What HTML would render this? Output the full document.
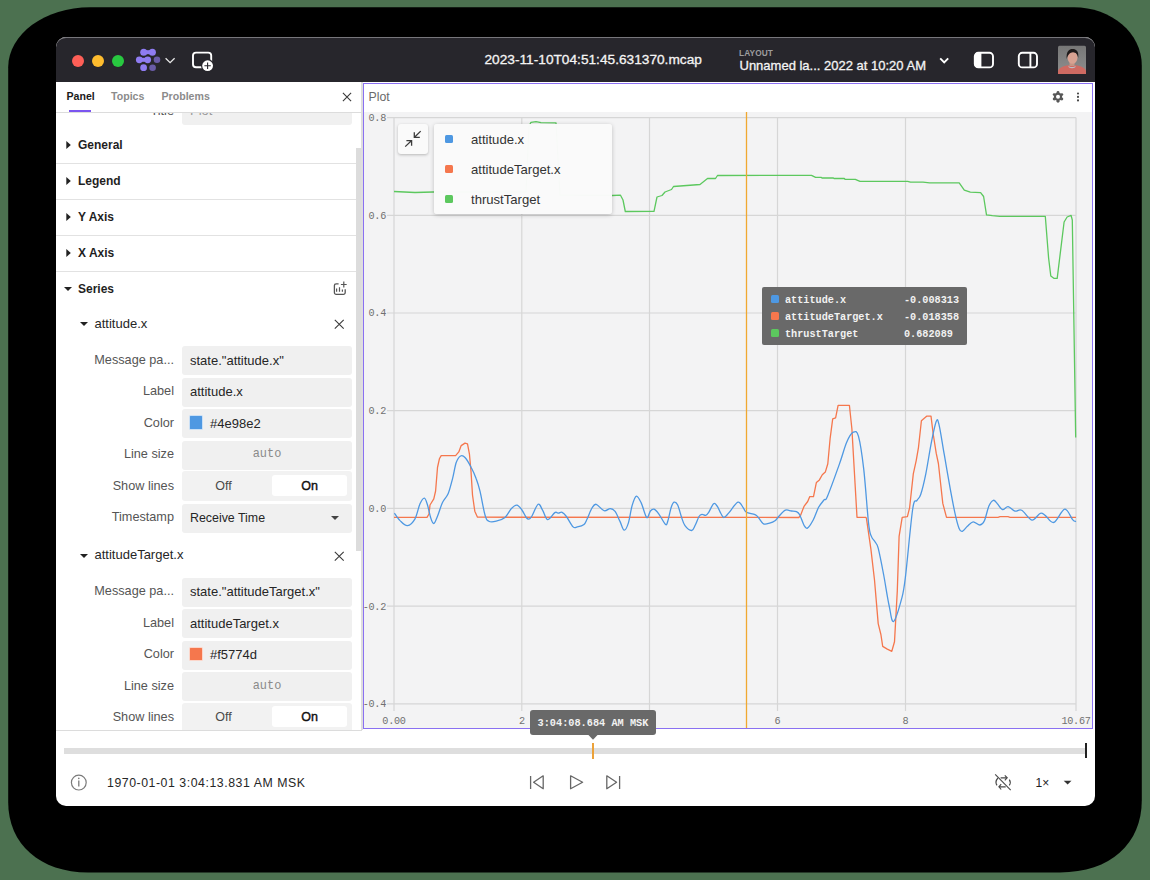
<!DOCTYPE html>
<html><head><meta charset="utf-8">
<style>
*{box-sizing:border-box;margin:0;padding:0}
html,body{width:1150px;height:880px;overflow:hidden;background:#4c7150;font-family:"Liberation Sans",sans-serif;position:relative}
.a{position:absolute}
.t{position:absolute;white-space:nowrap;line-height:1}
.mono{font-family:"Liberation Mono",monospace}
#shadow{left:9px;top:7px;width:1133px;height:865px;background:#000;border-radius:70px}
#win{left:56px;top:37px;width:1038.6px;height:769px;background:#fff;border-radius:10px;overflow:hidden}
#titlebar{left:56px;top:37px;width:1038.6px;height:45px;background:#27262c;border-top:1px solid #77767b;border-radius:10px 10px 0 0}
.tl{position:absolute;top:54.5px;width:12.5px;height:12.5px;border-radius:50%}
.hdr{position:absolute;left:78px;font-weight:bold;font-size:12px;color:#1f1f1f;white-space:nowrap;line-height:1;margin-top:-0.7px}
.tri{position:absolute;left:66.4px;width:0;height:0;border-top:3.75px solid transparent;border-bottom:3.75px solid transparent;border-left:4.2px solid #222;margin-top:0.2px}
.trid{position:absolute;width:0;height:0;border-left:4.2px solid transparent;border-right:4.2px solid transparent;border-top:4.3px solid #222}
.rdiv{position:absolute;left:56px;width:300px;height:1px;background:#e2e2e2;margin-top:0.8px}
.lbl{position:absolute;left:54px;width:120px;text-align:right;font-size:12.7px;color:#555;white-space:nowrap;line-height:1}
.inp{position:absolute;left:182px;width:170px;height:29px;background:#f0f0f0;border-radius:3px}
.itx{position:absolute;left:190px;font-size:13px;color:#262626;white-space:nowrap;line-height:1}
.auto{position:absolute;left:182px;width:170px;text-align:center;font-family:"Liberation Mono",monospace;font-size:11.9px;color:#8a8a8a;line-height:1}
.on{position:absolute;left:272px;width:75px;height:21px;background:#fff;border-radius:3px}
.offt{position:absolute;left:178.5px;width:90px;text-align:center;font-size:12.5px;color:#4a4a4a;line-height:1}
.ont{position:absolute;left:272px;width:75px;text-align:center;font-size:12.5px;color:#111;line-height:1;-webkit-text-stroke:0.4px #111}
.sw{position:absolute;left:188.8px;width:14.6px;height:14.6px;border-radius:1.5px;border:1px solid rgba(255,255,255,0.7)}
.ylab{position:absolute;left:340px;width:46px;text-align:right;font-family:"Liberation Mono",monospace;font-size:10.2px;color:#707070;line-height:1;letter-spacing:-0.3px}
.xlab{position:absolute;width:40px;text-align:center;font-family:"Liberation Mono",monospace;font-size:10.2px;color:#707070;line-height:1;letter-spacing:-0.3px}
.lg{position:absolute;left:471px;font-size:13.1px;color:#333;white-space:nowrap;line-height:1}
.lgs{position:absolute;left:445px;width:8px;height:8px;border-radius:1.5px}
.tts{position:absolute;left:771px;width:8px;height:8px;border-radius:1.5px}
.ttn{position:absolute;left:785px;margin-top:2.2px;transform:scaleY(1.12);transform-origin:0 50%;font-family:"Liberation Mono",monospace;font-weight:bold;font-size:10.2px;color:#f2f2f2;white-space:nowrap;line-height:1}
.ttv{position:absolute;left:904px;margin-top:2.2px;transform:scaleY(1.12);transform-origin:0 50%;font-family:"Liberation Mono",monospace;font-weight:bold;font-size:10.2px;color:#f2f2f2;white-space:nowrap;line-height:1}
</style></head>
<body>
<svg class="a" style="left:0;top:0" width="1150" height="880" viewBox="0 0 1150 880"><path d="M8.2,67.3 C8.2,34.2 44.9,7.3 90.2,7.3 H1073.8 C1111.4,7.3 1141.8,33.3 1141.8,65.3 V800.3 C1141.8,843.5 1110.6,872.5 1059.8,872.5 H88.2 C40.2,872.5 8.2,844.3 8.2,802.3 Z" fill="#000"/></svg>
<div id="win" class="a"></div>
<div id="titlebar" class="a"></div>
<div class="tl" style="left:71.5px;background:#fe5f57"></div>
<div class="tl" style="left:91.5px;background:#febc2e"></div>
<div class="tl" style="left:111.5px;background:#28c840"></div>

<!-- title bar icons -->
<svg class="a" style="left:0;top:0" width="1150" height="90" viewBox="0 0 1150 90">
  <g fill="#8f7cf2">
    <circle cx="143.7" cy="52.2" r="3.5"/><circle cx="152.4" cy="52.2" r="3.5"/><rect x="143.7" y="50.2" width="8.7" height="4"/>
    <circle cx="139.3" cy="59.8" r="3.4"/><circle cx="147.7" cy="59.8" r="3.4"/><rect x="139.3" y="57.8" width="8.4" height="4"/>
    <circle cx="143.6" cy="67.7" r="3.4"/>
  </g>
  <g fill="#6a5ca8">
    <circle cx="157" cy="59.8" r="3.3"/>
    <circle cx="152.6" cy="67.7" r="3.3"/>
  </g>
  <path d="M165.6,58.2 L170.1,62.6 L174.6,58.2" fill="none" stroke="#e8e8e8" stroke-width="1.3"/>
  <rect x="193" y="52.6" width="18.2" height="14.6" rx="3" fill="none" stroke="#fff" stroke-width="1.9"/>
  <circle cx="207.6" cy="65.7" r="6.6" fill="#27262c"/>
  <circle cx="207.6" cy="65.7" r="5.4" fill="#fff"/>
  <path d="M207.6,62.5 V68.9 M204.4,65.7 H210.8" stroke="#27262c" stroke-width="1.1"/>
  <path d="M940.2,58.4 L944.2,62.4 L948.2,58.4" fill="none" stroke="#fff" stroke-width="1.9"/>
  <rect x="974.8" y="52.8" width="18.2" height="14.6" rx="3.5" fill="none" stroke="#fff" stroke-width="1.9"/>
  <path d="M977.5,52.8 H981.4 V67.4 H977.5 A2.7,2.7 0 0 1 974.8,64.7 V55.5 A2.7,2.7 0 0 1 977.5,52.8Z" fill="#fff"/>
  <rect x="1018.8" y="52.8" width="18.2" height="14.6" rx="3.5" fill="none" stroke="#fff" stroke-width="1.9"/>
  <path d="M1030.4,52.8 V67.4" stroke="#fff" stroke-width="1.9"/>
  <defs><linearGradient id="av" x1="0" y1="0" x2="0" y2="1"><stop offset="0" stop-color="#777"/><stop offset="1" stop-color="#8e8e8e"/></linearGradient></defs>
  <rect x="1058" y="45.8" width="28" height="28.2" rx="1.5" fill="url(#av)"/>
  <path d="M1058,74 V71 C1059,67.5 1063,66 1068.5,65.2 H1075.5 C1081,66 1085,67.5 1086,71 V74Z" fill="#cf6a62"/>
  <path d="M1069.5,62 H1074.5 V66 H1069.5Z" fill="#c79585"/>
  <path d="M1068,65.5 C1070,67.5 1074,67.5 1076,65.5 L1075,67.5 C1073,68.5 1071,68.5 1069,67.5Z" fill="#b8c0c8"/>
  <ellipse cx="1072.5" cy="57.5" rx="5" ry="6.3" fill="#d9a292"/>
  <path d="M1066.7,59 C1066,51.5 1069,49 1072.5,49 C1076.5,49 1079,51.5 1078.2,58 C1077.5,54 1076,52.5 1073,52.3 C1070,52.5 1068,54.5 1066.7,59Z" fill="#1f1b1b"/>
</svg>
<div class="t" style="left:484.5px;top:53px;font-size:13.7px;color:#f4f4f4;-webkit-text-stroke:0.3px #f4f4f4">2023-11-10T04:51:45.631370.mcap</div>
<div class="t" style="left:739px;top:48.8px;font-size:8.3px;font-weight:bold;color:#9d9d9f;letter-spacing:0.1px">LAYOUT</div>
<div class="t" style="left:739.5px;top:59px;font-size:13px;color:#f4f4f4;-webkit-text-stroke:0.3px #f4f4f4">Unnamed la... 2022 at 10:20 AM</div>

<!-- left panel -->
<div class="t" style="left:66.5px;top:91px;font-size:10.6px;font-weight:bold;color:#1a1a1a">Panel</div>
<div class="t" style="left:111px;top:91px;font-size:10.6px;color:#8b8b8b;font-weight:bold">Topics</div>
<div class="t" style="left:161.5px;top:91px;font-size:10.6px;color:#8b8b8b;font-weight:bold">Problems</div>
<div class="a" style="left:69px;top:110px;width:22px;height:2px;background:#7b55f0"></div>
<svg class="a" style="left:340px;top:90px" width="14" height="14"><path d="M2.9,2.9 L11.1,11.1 M11.1,2.9 L2.9,11.1" stroke="#3a3a3a" stroke-width="1.1"/></svg>

<div class="a" style="left:56px;top:112.5px;width:306px;height:617px;overflow:hidden">
  <!-- inner content uses page coords via offset -->
  <div class="a" style="left:-56px;top:-112.5px;width:1150px;height:880px">
    <div class="lbl" style="top:104.5px">Title</div>
    <div class="inp" style="top:96px"></div>
    <div class="itx" style="top:104px;color:#9a9a9a">Plot</div>

    <svg class="a" style="left:60px;top:137.15px" width="16" height="16" viewBox="60 137.15 16 16"><path d="M66.3,141.20 L70.8,145.15 L66.3,149.10Z" fill="#222"/></svg><div class="hdr" style="top:139.5px">General</div>
    <div class="rdiv" style="top:162.2px"></div>
    <svg class="a" style="left:60px;top:173.15px" width="16" height="16" viewBox="60 173.15 16 16"><path d="M66.3,177.20 L70.8,181.15 L66.3,185.10Z" fill="#222"/></svg><div class="hdr" style="top:175.5px">Legend</div>
    <div class="rdiv" style="top:198.2px"></div>
    <svg class="a" style="left:60px;top:209.15px" width="16" height="16" viewBox="60 209.15 16 16"><path d="M66.3,213.20 L70.8,217.15 L66.3,221.10Z" fill="#222"/></svg><div class="hdr" style="top:211.5px">Y Axis</div>
    <div class="rdiv" style="top:234.2px"></div>
    <svg class="a" style="left:60px;top:245.15px" width="16" height="16" viewBox="60 245.15 16 16"><path d="M66.3,249.20 L70.8,253.15 L66.3,257.10Z" fill="#222"/></svg><div class="hdr" style="top:247.5px">X Axis</div>
    <div class="rdiv" style="top:270.2px"></div>
    <div class="trid" style="left:63.9px;top:286.5px"></div><div class="hdr" style="top:283.5px">Series</div>
    <svg class="a" style="left:330px;top:279px" width="20" height="20" viewBox="330 279 20 20">
      <path d="M338.6,283.8 H336.2 A1.8,1.8 0 0 0 334.4,285.6 V292.6 A1.8,1.8 0 0 0 336.2,294.4 H343.4 A1.8,1.8 0 0 0 345.2,292.6 V289.2" fill="none" stroke="#555" stroke-width="1.3"/>
      <path d="M336.6,288.5 V291.8 M339.5,287.2 V291.8 M342.4,289.5 V291.8 M343.8,281.6 V287.4 M340.9,284.5 H346.7" stroke="#555" stroke-width="1.2"/>
    </svg>

    <!-- series 1 -->
    <div class="trid" style="left:80px;top:322.3px"></div>
    <div class="t" style="left:94.5px;top:316.5px;font-size:13px;color:#262626">attitude.x</div>
    <svg class="a" style="left:332px;top:317px" width="14" height="14"><path d="M2.8,2.8 L11.7,11.7 M11.7,2.8 L2.8,11.7" stroke="#3a3a3a" stroke-width="1.1"/></svg>

    <div class="lbl" style="top:353.5px">Message pa...</div><div class="inp" style="top:346px"></div>
    <div class="itx" style="top:353.5px">state."attitude.x"</div>
    <div class="lbl" style="top:385px">Label</div><div class="inp" style="top:377.5px"></div>
    <div class="itx" style="top:385px">attitude.x</div>
    <div class="lbl" style="top:416.5px">Color</div><div class="inp" style="top:409px"></div>
    <div class="sw" style="top:415px;background:#4e98e2"></div>
    <div class="itx" style="left:210px;top:416.5px">#4e98e2</div>
    <div class="lbl" style="top:448px">Line size</div><div class="inp" style="top:440.5px"></div>
    <div class="auto" style="top:449.2px">auto</div>
    <div class="lbl" style="top:479.5px">Show lines</div><div class="inp" style="top:471px;height:29.5px;background:#f2f2f2"></div>
    <div class="on" style="top:474.8px"></div>
    <div class="offt" style="top:479.5px">Off</div><div class="ont" style="top:479.5px">On</div>
    <div class="lbl" style="top:511px">Timestamp</div><div class="inp" style="top:503.5px"></div>
    <div class="itx" style="top:511.5px;font-size:12.4px">Receive Time</div>
    <div class="trid" style="left:330.5px;top:515.5px;border-left-width:4.5px;border-right-width:4.5px;border-top-width:4.5px;border-top-color:#444"></div>

    <!-- series 2 -->
    <div class="trid" style="left:80px;top:553.8px"></div>
    <div class="t" style="left:94.5px;top:548px;font-size:13px;color:#262626">attitudeTarget.x</div>
    <svg class="a" style="left:332px;top:548.5px" width="14" height="14"><path d="M2.8,2.8 L11.7,11.7 M11.7,2.8 L2.8,11.7" stroke="#3a3a3a" stroke-width="1.1"/></svg>

    <div class="lbl" style="top:585px">Message pa...</div><div class="inp" style="top:577.5px"></div>
    <div class="itx" style="top:585px">state."attitudeTarget.x"</div>
    <div class="lbl" style="top:616.5px">Label</div><div class="inp" style="top:609px"></div>
    <div class="itx" style="top:616.5px">attitudeTarget.x</div>
    <div class="lbl" style="top:648px">Color</div><div class="inp" style="top:640.5px"></div>
    <div class="sw" style="top:646.6px;background:#f5774d"></div>
    <div class="itx" style="left:210px;top:648px">#f5774d</div>
    <div class="lbl" style="top:679.5px">Line size</div><div class="inp" style="top:672px"></div>
    <div class="auto" style="top:681.3px">auto</div>
    <div class="lbl" style="top:711px">Show lines</div><div class="inp" style="top:702.5px;height:29.5px;background:#f2f2f2"></div>
    <div class="on" style="top:706.3px"></div>
    <div class="offt" style="top:711px">Off</div><div class="ont" style="top:711px">On</div>

    <!-- scrollbar -->
    <div class="a" style="left:356px;top:148px;width:6px;height:402.5px;background:#dcdcdc"></div>
  </div>
</div>
<div class="a" style="left:56px;top:112px;width:306px;height:1px;background:#dcdcdc"></div>
<div class="a" style="left:361px;top:82px;width:2px;height:648px;background:#dedede"></div>

<!-- plot panel -->
<div class="a" style="left:362.5px;top:82.5px;width:730.5px;height:646.5px;background:#f3f3f4;border:1.5px solid #8a70f2"></div>
<div class="a" style="left:364px;top:84px;width:728px;height:28px;background:#fff"></div>
<div class="t" style="left:368.5px;top:90.5px;font-size:12.3px;color:#6a6a6a">Plot</div>
<svg class="a" style="left:1048px;top:87px" width="40" height="20" viewBox="1048 87 40 20">
  <g fill="#585858"><circle cx="1058" cy="96.8" r="4.1"/>
  <circle cx="1058" cy="92.4" r="1.45"/><circle cx="1058" cy="101.2" r="1.45"/>
  <circle cx="1054.2" cy="94.6" r="1.45"/><circle cx="1061.8" cy="94.6" r="1.45"/>
  <circle cx="1054.2" cy="99" r="1.45"/><circle cx="1061.8" cy="99" r="1.45"/></g>
  <circle cx="1058" cy="96.8" r="2" fill="#fff"/>
  <circle cx="1078" cy="93.5" r="1.05" fill="#444"/>
  <circle cx="1078" cy="96.9" r="1.05" fill="#444"/>
  <circle cx="1078" cy="100.4" r="1.05" fill="#444"/>
</svg>

<!-- chart -->
<svg class="a" style="left:0;top:0" width="1150" height="880" viewBox="0 0 1150 880">
  <defs><clipPath id="pc"><rect x="364" y="112" width="728" height="616"/></clipPath></defs>
  <g clip-path="url(#pc)">
    <g stroke="#d6d6d6" stroke-width="1.2" fill="none">
      <path d="M394,117.6 H1076 M394,215.3 H1076 M394,313 H1076 M394,410.6 H1076 M394,508.4 H1076 M394,606.2 H1076 M394,703.9 H1076"/>
      <path d="M394,117.6 V711 M521.8,117.6 V711 M649.5,117.6 V711 M777.5,117.6 V711 M905.5,117.6 V711 M1076,117.6 V711"/>
      <path d="M387,117.6 H394 M387,215.3 H394 M387,313 H394 M387,410.6 H394 M387,508.4 H394 M387,606.2 H394 M387,703.9 H394"/>
    </g>
    <path d="M394.0,191.5 L415.0,192.5 L433.0,192.0 L526.0,192.0 L529.0,126.0 L531.0,122.3 L536.0,121.6 L541.0,122.6 L556.0,122.8 L560.0,195.0 L612.5,195.5 L620.5,195.2 L623.0,200.0 L625.3,211.5 L654.0,211.4 L657.0,197.0 L662.0,195.5 L665.0,192.0 L671.5,189.5 L673.5,186.5 L700.0,184.5 L707.5,178.5 L715.5,178.5 L717.5,175.5 L811.5,175.4 L815.6,177.4 L821.4,177.4 L822.0,178.0 L833.4,178.0 L834.0,178.5 L844.3,178.5 L845.0,179.3 L855.3,179.3 L860.0,181.3 L907.7,181.3 L910.5,182.2 L923.0,182.2 L929.6,182.8 L959.2,182.8 L964.3,190.2 L970.3,192.2 L980.6,192.6 L983.6,196.5 L986.5,214.9 L992.4,215.6 L999.8,216.3 L1045.3,216.3 L1048.6,258.0 L1050.8,276.0 L1053.8,278.3 L1057.2,278.3 L1064.1,222.0 L1067.1,217.0 L1071.1,215.4 L1072.3,220.0 L1075.7,437.5" fill="none" stroke="#5cc85e" stroke-width="1.3" stroke-linejoin="round"/>
    <path d="M394.0,517.3 L427.0,517.3 L429.0,514.0 L430.0,505.0 L433.8,498.8 L435.6,491.0 L437.5,467.5 L439.4,458.8 L441.2,455.6 L455.6,455.6 L458.8,451.9 L461.2,445.6 L465.0,443.1 L467.5,443.8 L469.4,453.8 L471.0,471.2 L472.5,495.0 L474.8,511.2 L477.5,517.2 L798.8,517.5 L800.5,515.5 L804.0,506.4 L807.7,501.5 L809.8,496.6 L813.5,496.6 L816.4,482.4 L819.4,479.9 L822.3,474.8 L825.3,472.1 L827.8,463.7 L830.2,437.8 L832.7,418.9 L835.6,417.9 L838.1,405.3 L849.4,405.3 L851.9,429.0 L857.0,517.3 L865.9,517.3 L866.4,518.2 L870.9,549.1 L874.5,580.0 L878.2,623.6 L880.9,634.5 L882.7,646.4 L887.3,649.1 L891.8,651.3 L894.5,641.8 L897.3,590.9 L899.1,536.4 L902.2,517.3 L907.4,516.7 L909.6,507.8 L913.3,473.9 L916.2,460.6 L918.5,447.3 L921.4,420.7 L926.6,416.2 L931.0,416.2 L933.2,434.0 L936.2,453.2 L938.4,463.5 L942.8,503.4 L946.5,517.4 L998.0,517.3 L1000.0,516.7 L1008.0,516.7 L1010.0,517.3 L1076.0,517.3" fill="none" stroke="#f5774d" stroke-width="1.3" stroke-linejoin="round"/>
    <path d="M394.4,513.1 C395.3,514.4 397.8,518.5 400.0,520.6 C402.2,522.7 405.0,525.9 407.5,525.6 C410.0,525.3 412.9,522.4 415.0,518.8 C417.1,515.1 418.4,507.2 420.0,503.8 C421.6,500.3 423.1,497.9 424.4,498.1 C425.6,498.3 426.5,501.8 427.5,505.0 C428.5,508.2 429.6,514.4 430.6,517.5 C431.6,520.6 432.6,523.7 433.8,523.5 C434.9,523.3 436.0,519.8 437.5,516.2 C439.0,512.8 440.7,506.2 442.5,502.5 C444.3,498.8 446.4,497.7 448.1,493.8 C449.8,489.8 451.1,484.0 452.5,478.8 C453.9,473.5 454.9,466.3 456.2,462.5 C457.6,458.7 459.1,456.8 460.6,456.0 C462.1,455.2 463.2,455.6 465.0,457.5 C466.8,459.4 469.4,464.0 471.2,467.5 C473.1,471.0 474.8,474.8 476.2,478.8 C477.7,482.7 478.5,485.2 480.0,491.2 C481.5,497.3 483.5,510.0 485.0,515.0 C486.5,520.0 486.9,520.2 488.8,521.2 C490.6,522.3 493.5,521.9 496.2,521.2 C499.0,520.6 502.5,519.6 505.0,517.5 C507.5,515.4 509.3,510.8 511.2,508.8 C513.2,506.7 515.1,505.0 516.9,505.2 C518.7,505.5 520.3,508.0 521.9,510.0 C523.5,512.0 525.1,516.0 526.2,517.5 C527.4,519.0 527.8,519.4 528.7,519.2 C529.6,519.0 530.1,519.0 531.7,516.5 C533.3,514.0 536.3,505.3 538.1,504.3 C539.9,503.3 541.1,507.8 542.7,510.4 C544.3,512.9 545.5,519.2 547.5,519.6 C549.5,520.0 553.0,513.7 554.8,512.6 C556.6,511.5 557.3,513.2 558.5,513.1 C559.7,513.0 560.8,511.7 562.1,512.3 C563.4,512.9 564.6,514.1 566.4,516.5 C568.2,518.9 571.3,525.2 573.1,526.9 C574.9,528.6 575.5,527.3 577.3,526.9 C579.1,526.5 582.4,525.7 584.0,524.4 C585.6,523.1 585.8,521.7 587.1,519.0 C588.4,516.3 590.5,510.4 592.0,508.0 C593.5,505.6 594.2,503.9 596.2,504.3 C598.2,504.8 601.8,510.0 604.1,510.7 C606.4,511.4 608.4,508.5 610.2,508.6 C612.0,508.7 613.5,509.3 615.1,511.4 C616.7,513.5 618.5,518.3 620.0,521.4 C621.5,524.5 622.8,530.0 624.2,530.2 C625.6,530.4 627.2,526.7 628.5,522.6 C629.8,518.5 630.8,510.0 632.1,505.6 C633.4,501.2 634.9,496.5 636.4,496.1 C637.9,495.7 639.6,499.5 641.3,503.1 C643.0,506.7 645.2,516.2 646.7,517.5 C648.2,518.8 649.2,512.4 650.4,511.0 C651.6,509.6 652.6,508.7 654.0,509.2 C655.4,509.7 657.0,511.6 658.9,514.1 C660.8,516.6 664.0,523.3 665.5,524.4 C667.0,525.5 667.0,523.5 667.9,520.8 C668.8,518.1 670.0,511.1 671.0,508.0 C672.0,504.9 672.9,502.7 674.0,502.2 C675.1,501.7 676.5,502.6 677.7,505.0 C678.9,507.4 680.1,513.0 681.3,516.5 C682.5,520.0 683.3,523.4 685.0,525.7 C686.7,528.0 690.0,530.6 691.7,530.5 C693.4,530.4 694.1,527.3 695.3,525.0 C696.5,522.7 697.9,518.3 699.0,516.5 C700.1,514.7 700.9,514.5 702.0,514.3 C703.1,514.1 704.6,515.6 705.7,515.3 C706.8,515.0 707.4,514.2 708.7,512.3 C710.0,510.4 712.2,504.7 713.6,503.7 C715.0,502.7 716.0,504.6 717.2,506.2 C718.4,507.8 719.8,511.6 720.9,513.5 C722.0,515.4 722.6,517.6 723.9,517.5 C725.2,517.4 726.5,515.4 728.8,512.9 C731.1,510.3 735.5,503.0 737.9,502.2 C740.3,501.4 742.0,506.3 743.4,508.0 C744.8,509.7 744.5,511.2 746.4,512.3 C748.3,513.4 753.0,513.8 755.0,514.7 C757.0,515.6 757.2,516.2 758.6,517.7 C760.0,519.2 761.7,522.9 763.5,523.8 C765.3,524.7 767.7,523.7 769.6,523.2 C771.5,522.7 773.5,521.9 775.0,520.8 C776.5,519.7 777.0,518.3 778.7,516.5 C780.4,514.7 783.3,511.1 785.4,510.2 C787.5,509.3 789.7,510.8 791.5,511.0 C793.3,511.2 795.1,511.1 796.4,511.7 C797.7,512.3 798.2,512.3 799.5,514.5 C800.8,516.7 802.6,522.7 803.9,525.0 C805.2,527.3 805.8,529.0 807.4,528.2 C809.0,527.4 811.3,523.5 813.2,520.0 C815.1,516.5 816.8,510.6 818.6,507.3 C820.4,504.0 822.5,501.9 824.0,500.0 C825.5,498.1 825.0,502.1 827.5,496.2 C830.0,490.3 836.1,473.4 839.3,464.4 C842.5,455.4 844.4,447.7 846.7,442.3 C849.0,436.9 851.3,433.2 853.3,432.2 C855.3,431.2 856.8,430.3 858.5,436.4 C860.2,442.5 862.0,454.4 863.7,468.9 C865.4,483.4 867.3,512.4 868.6,523.6 C869.9,534.9 870.3,533.4 871.4,536.4 C872.5,539.4 873.9,539.8 875.0,541.8 C876.1,543.8 876.8,542.8 878.2,548.2 C879.6,553.7 881.8,565.0 883.6,574.5 C885.4,584.0 887.4,597.7 889.1,605.5 C890.8,613.3 891.5,622.7 893.6,621.5 C895.7,620.3 899.8,605.7 901.8,598.2 C903.8,590.7 903.7,591.3 905.5,576.4 C907.3,561.5 910.8,521.7 912.7,509.0 C914.6,496.3 915.7,502.8 917.0,500.4 C918.3,498.0 919.2,498.9 920.7,494.5 C922.2,490.1 924.1,482.3 925.8,473.9 C927.5,465.5 929.3,453.1 931.0,444.3 C932.7,435.6 934.9,424.6 936.2,421.4 C937.6,418.2 937.8,419.6 939.1,425.1 C940.5,430.7 942.4,444.1 944.3,454.7 C946.1,465.3 948.4,478.5 950.2,488.6 C952.1,498.7 953.9,508.6 955.4,515.2 C956.9,521.9 958.0,525.8 959.1,528.5 C960.2,531.2 960.9,531.8 962.3,531.4 C963.7,531.0 965.6,527.9 967.4,526.3 C969.2,524.7 971.0,522.0 973.1,521.8 C975.2,521.6 978.0,525.2 979.9,525.0 C981.8,524.8 982.9,523.9 984.4,520.7 C985.9,517.5 987.4,509.4 988.9,506.0 C990.4,502.6 992.0,500.7 993.4,500.3 C994.8,499.9 995.9,502.1 997.4,503.7 C998.9,505.2 1000.7,509.1 1002.5,509.6 C1004.3,510.1 1006.0,506.4 1008.1,506.6 C1010.2,506.9 1012.6,510.5 1014.9,511.1 C1017.2,511.7 1018.9,508.8 1021.7,510.3 C1024.5,511.8 1028.8,519.6 1031.9,520.1 C1035.0,520.6 1038.0,514.0 1040.3,513.3 C1042.5,512.5 1043.1,514.1 1045.4,515.6 C1047.7,517.1 1050.7,523.5 1053.9,522.4 C1057.1,521.3 1061.6,509.7 1064.7,509.2 C1067.8,508.7 1070.7,517.5 1072.6,519.6 C1074.5,521.7 1075.4,521.3 1076.0,521.6" fill="none" stroke="#4e98e2" stroke-width="1.3" stroke-linejoin="round"/>
    <path d="M746.5,112 V728" stroke="#f0a830" stroke-width="1.3"/>
  </g>
</svg>
<div class="ylab" style="top:114.0px">0.8</div>
<div class="ylab" style="top:211.7px">0.6</div>
<div class="ylab" style="top:309.4px">0.4</div>
<div class="ylab" style="top:407.0px">0.2</div>
<div class="ylab" style="top:504.8px">0.0</div>
<div class="ylab" style="top:602.6px">-0.2</div>
<div class="ylab" style="top:700.2px">-0.4</div>
<div class="xlab" style="left:374px;top:716.7px">0.00</div>
<div class="xlab" style="left:502px;top:716.7px">2</div>
<div class="xlab" style="left:757.5px;top:716.7px">6</div>
<div class="xlab" style="left:885.5px;top:716.7px">8</div>
<div class="xlab" style="left:1056px;top:716.7px">10.67</div>

<!-- compress button + legend -->
<div class="a" style="left:398px;top:124px;width:30px;height:30px;background:#fafafa;border-radius:3px;box-shadow:0 1px 3px rgba(0,0,0,0.25)"></div>
<svg class="a" style="left:398px;top:124px" width="30" height="30" viewBox="0 0 30 30">
  <path d="M7.2,22.6 L13.4,16.8 M8.4,16.6 H13.6 V21.7 M22.7,7.1 L16.5,13.2 M16.3,8.3 V13.4 H21.8" fill="none" stroke="#3c3c3c" stroke-width="1.3"/>
</svg>
<div class="a" style="left:434px;top:124px;width:178px;height:90px;background:rgba(250,250,250,0.985);border-radius:3px;box-shadow:0 1px 4px rgba(0,0,0,0.22)"></div>
<div class="lgs" style="top:135px;background:#4e98e2"></div><div class="lg" style="top:132.5px">attitude.x</div>
<div class="lgs" style="top:165px;background:#f5774d"></div><div class="lg" style="top:162.5px">attitudeTarget.x</div>
<div class="lgs" style="top:195px;background:#5cc85e"></div><div class="lg" style="top:192.5px">thrustTarget</div>

<!-- tooltip -->
<div class="a" style="left:761.5px;top:287px;width:205.5px;height:57.5px;background:#696969;border-radius:2px"></div>
<div class="tts" style="top:295px;background:#4e98e2"></div><div class="ttn" style="top:293.5px">attitude.x</div><div class="ttv" style="top:293.5px">-0.008313</div>
<div class="tts" style="top:312px;background:#f5774d"></div><div class="ttn" style="top:310.5px">attitudeTarget.x</div><div class="ttv" style="top:310.5px">-0.018358</div>
<div class="tts" style="top:329px;background:#5cc85e"></div><div class="ttn" style="top:327.5px">thrustTarget</div><div class="ttv" style="top:327.5px">0.682089</div>

<!-- bottom bar -->
<div class="a" style="left:56px;top:729.5px;width:306px;height:1px;background:#dcdcdc"></div>
<div class="a" style="left:64px;top:748px;width:1022px;height:5.5px;background:#dedede"></div>
<div class="a" style="left:591.8px;top:743px;width:2.4px;height:15.8px;background:#eca23a"></div>
<div class="a" style="left:1085px;top:743.4px;width:1.8px;height:15px;background:#222"></div>
<div class="a" style="left:530px;top:710.2px;width:126px;height:24.4px;background:#696969;border-radius:3px"></div>
<svg class="a" style="left:583px;top:734px" width="20" height="7"><path d="M4.5,0 L10,5.8 L15.5,0Z" fill="#696969"/></svg>
<div class="t mono" style="left:537.5px;top:717.6px;font-size:10.27px;font-weight:bold;color:#f2f2f2;transform:scaleY(1.12);transform-origin:0 50%">3:04:08.684 AM MSK</div>

<svg class="a" style="left:0;top:760px" width="1150" height="40" viewBox="0 760 1150 40">
  <circle cx="78.8" cy="782.6" r="7.4" fill="none" stroke="#7a7a7a" stroke-width="1.2"/>
  <path d="M78.8,780.5 V786.5" stroke="#7a7a7a" stroke-width="1.3"/>
  <circle cx="78.8" cy="778.4" r="0.8" fill="#7a7a7a"/>
  <path d="M530.6,776 V789" stroke="#666" stroke-width="1.3"/>
  <path d="M543.2,775.8 L533.6,782.2 L543.2,788.7Z" fill="none" stroke="#666" stroke-width="1.3" stroke-linejoin="round"/>
  <path d="M570.6,775.8 L582.6,782.2 L570.6,788.7Z" fill="none" stroke="#666" stroke-width="1.3" stroke-linejoin="round"/>
  <path d="M606.8,775.8 L616.6,782.2 L606.8,788.7Z" fill="none" stroke="#666" stroke-width="1.3" stroke-linejoin="round"/>
  <path d="M619.6,776 V789" stroke="#666" stroke-width="1.3"/>
  <g fill="none" stroke="#4a4a4a" stroke-width="1.15">
  <path d="M995.2,774.4 L1010.7,790.1"/>
  <path d="M1000.6,777.8 H1006.2 M1004.8,775.3 L1007.2,777.8 L1004.8,780.3"/>
  <path d="M1009.3,779.6 Q1011.3,782.5 1009.3,785.4"/>
  <path d="M997.9,778 Q994.6,781.8 997,785.4"/>
  <path d="M999.5,786.8 H1005.7 M1001.2,784.2 L998.9,786.8 L1001.2,789.5"/>
  </g>
  <path d="M1063.7,780.7 H1071.5 L1067.6,784.6Z" fill="#333"/>
</svg>
<div class="t" style="left:107px;top:777px;font-size:12.3px;color:#262626;letter-spacing:0.55px">1970-01-01 3:04:13.831 AM MSK</div>
<div class="t" style="left:1035.5px;top:777px;font-size:12px;color:#222">1×</div>
</body></html>
